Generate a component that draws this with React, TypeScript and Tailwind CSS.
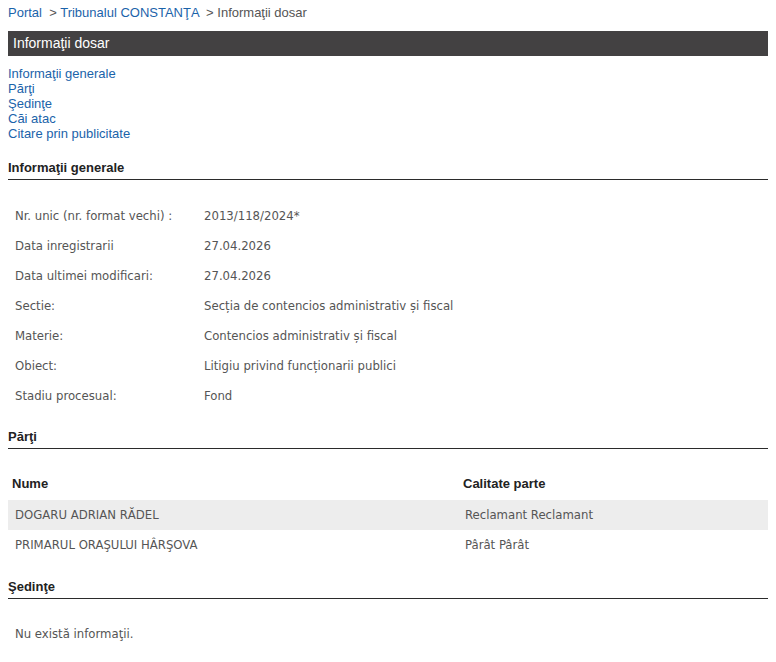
const info = [
  ["Nr. unic (nr. format vechi) :", "2013/118/2024*"],
  ["Data inregistrarii", "27.04.2026"],
  ["Data ultimei modificari:", "27.04.2026"],
  ["Sectie:", "Secția de contencios administrativ și fiscal"],
  ["Materie:", "Contencios administrativ și fiscal"],
  ["Obiect:", "Litigiu privind funcționarii publici"],
  ["Stadiu procesual:", "Fond"],
];

const parti = [
  ["DOGARU ADRIAN RĂDEL", "Reclamant Reclamant"],
  ["PRIMARUL ORAŞULUI HÂRŞOVA", "Pârât Pârât"],
];

const links = ["Informaţii generale", "Părţi", "Şedinţe", "Căi atac", "Citare prin publicitate"];

function SectionTitle({ children, className = "" }: { children: string; className?: string }) {
  return (
    <div className={`border-b border-[#2b2b2b] pb-[3px] text-[13px] leading-[16px] font-bold text-[#222] ${className}`}>
      {children}
    </div>
  );
}

export default function App() {
  return (
    <div className="min-h-[662px] bg-white px-2 font-['Liberation_Sans',Arial,sans-serif]">
      {/* breadcrumb */}
      <div className="h-[31px] pt-[5px] text-[13px] leading-[16px]">
        <a className="text-[#1b63aa]">Portal</a>
        <span className="text-[#555]">&nbsp; &gt; </span>
        <a className="text-[#1b63aa]">Tribunalul CONSTANŢA</a>
        <span className="text-[#555]"> &nbsp;&gt; Informaţii dosar</span>
      </div>

      <div className="h-[25px] bg-[#434142] pl-[5px] text-[14px] leading-[25px] text-white">Informaţii dosar</div>

      <div className="mt-[10px] flex flex-col text-[13px] leading-[15px] text-[#1b63aa]">
        {links.map((l) => (
          <a key={l}>{l}</a>
        ))}
      </div>

      <SectionTitle className="mt-[19px]">Informaţii generale</SectionTitle>

      <div className="mt-[21px] font-['DejaVu_Sans_Condensed','DejaVu_Sans',sans-serif] text-[13px] text-[#555]">
        {info.map(([k, v]) => (
          <div key={k} className="grid h-[30px] grid-cols-[189px_1fr] items-center pl-[7px]">
            <span>{k}</span>
            <span>{v}</span>
          </div>
        ))}
      </div>

      <SectionTitle className="mt-[18px]">Părţi</SectionTitle>

      <div className="mt-[21px]">
        <div className="grid h-[30px] grid-cols-[451px_1fr] items-center pb-[3px] text-[13px] font-bold text-[#222]">
          <span className="pl-[4px]">Nume</span>
          <span className="pl-[4px]">Calitate parte</span>
        </div>
        {parti.map(([n, c], i) => (
          <div
            key={n}
            className={`grid h-[30px] grid-cols-[451px_1fr] items-center font-['DejaVu_Sans_Condensed','DejaVu_Sans',sans-serif] text-[13px] text-[#555] ${
              i === 0 ? "bg-[#ededed]" : ""
            }`}
          >
            <span className="pl-[7px]">{n}</span>
            <span className="pl-[6px]">{c}</span>
          </div>
        ))}
      </div>

      <SectionTitle className="mt-[19px]">Şedinţe</SectionTitle>

      <div className="mt-[20px] flex h-[30px] items-center pl-[7px] font-['DejaVu_Sans_Condensed','DejaVu_Sans',sans-serif] text-[13px] text-[#555]">
        Nu există informaţii.
      </div>
    </div>
  );
}
